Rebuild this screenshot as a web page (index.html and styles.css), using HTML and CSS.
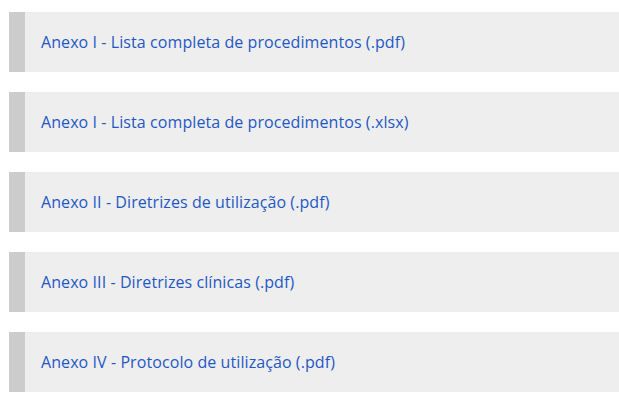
FILE: index.html
```html
<!DOCTYPE html>
<html lang="pt">
<head>
<meta charset="utf-8">
<link rel="stylesheet" href="styles.css">
</head>
<body>
<ul class="list">
  <li class="item"><a class="link" href="#">Anexo I - Lista completa de procedimentos (.pdf)</a></li>
  <li class="item"><a class="link" href="#">Anexo I - Lista completa de procedimentos (.xlsx)</a></li>
  <li class="item"><a class="link" href="#">Anexo II - Diretrizes de utilização (.pdf)</a></li>
  <li class="item"><a class="link" href="#">Anexo III - Diretrizes clínicas (.pdf)</a></li>
  <li class="item"><a class="link" href="#">Anexo IV - Protocolo de utilização (.pdf)</a></li>
</ul>
</body>
</html>
```
FILE: styles.css
```css
html, body {
  margin: 0;
  padding: 0;
  background: #ffffff;
}
body {
  padding: 12px 0 0 9px;
  font-family: "Open Sans", Lato, sans-serif;
}
.list {
  list-style: none;
  margin: 0;
  padding: 0;
  display: flex;
  flex-direction: column;
  gap: 20px;
}
.item {
  height: 60px;
  box-sizing: border-box;
  background: #eeeeee;
  border-left: 16px solid #cccccc;
  padding-left: 16px;
  display: flex;
  align-items: center;
}
.link {
  color: #1f58c4;
  text-decoration: none;
  font-size: 16px;
  letter-spacing: 0.08px;
}
```
